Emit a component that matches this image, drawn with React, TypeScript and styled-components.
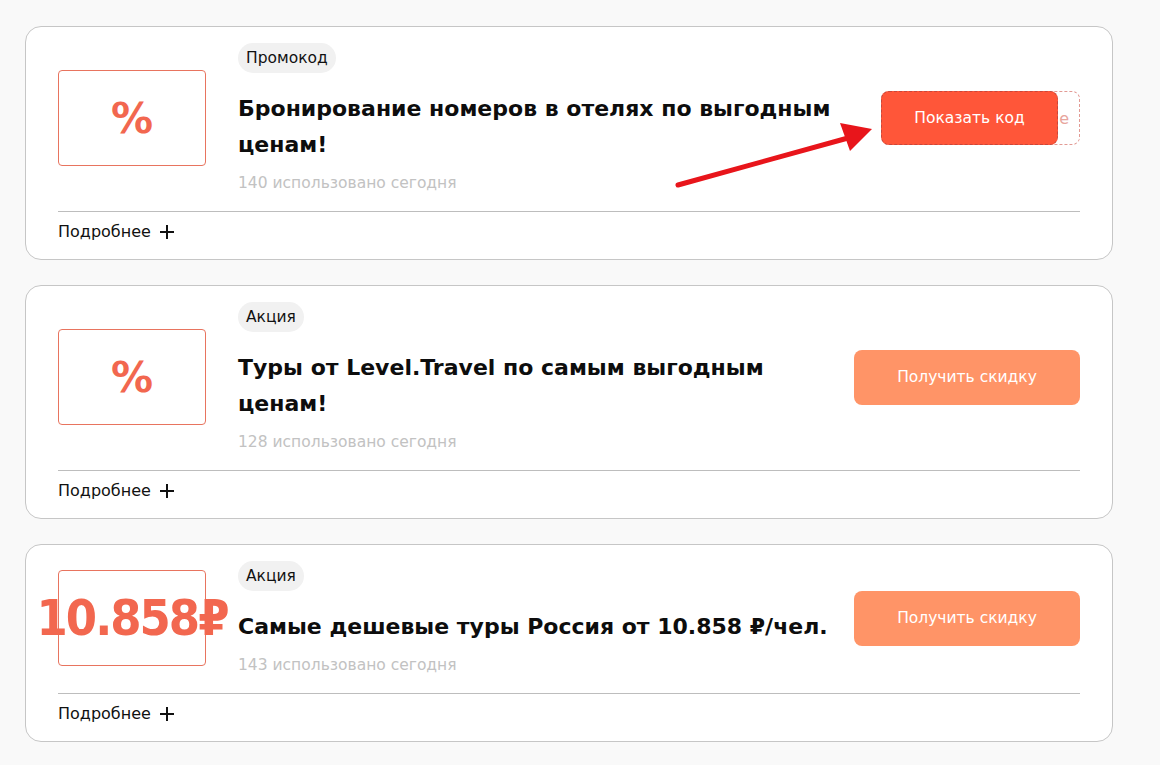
import styled, { createGlobalStyle } from 'styled-components';

const GlobalStyle = createGlobalStyle`
  html, body {
    margin: 0;
    padding: 0;
    background: #f9f9f9;
  }
  body {
    font-family: 'DejaVu Sans', 'Noto Sans', sans-serif;
    color: #111;
  }
`;

const Page = styled.div`
  position: relative;
  width: 1088px;
  padding: 26px 0 20px 25px;
  display: flex;
  flex-direction: column;
  gap: 25px;
`;

const Card = styled.div`
  background: #fff;
  border: 1px solid #c6c6c6;
  border-radius: 16px;
  padding: 16px 32px 0 32px;
`;

const Body = styled.div`
  display: flex;
  align-items: center;
`;

const Thumb = styled.div`
  flex: 0 0 auto;
  width: 146px;
  height: 94px;
  border: 1px solid #e8745f;
  border-radius: 4px;
  display: flex;
  align-items: center;
  justify-content: center;
  margin-right: 32px;
`;

const ThumbText = styled.span<{ $big?: boolean }>`
  font-family: ${(p) => (p.$big ? "'DejaVu Sans Condensed', 'DejaVu Sans'" : "'DejaVu Sans'")}, sans-serif;
  font-weight: 700;
  color: #f2674f;
  font-size: ${(p) => (p.$big ? '50px' : '42px')};
  letter-spacing: ${(p) => (p.$big ? '-2px' : '0')};
  white-space: nowrap;
`;

const Content = styled.div`
  flex: 1;
  min-width: 0;
  padding-right: 10px;
  display: flex;
  flex-direction: column;
  align-items: flex-start;
`;

const Badge = styled.span`
  display: inline-flex;
  align-items: center;
  height: 30px;
  padding: 0 8px;
  border-radius: 15px;
  background: #f1f1f1;
  font-size: 15.5px;
  color: #111;
`;

const Title = styled.div`
  margin-top: 18px;
  font-size: 22px;
  font-weight: 700;
  line-height: 36px;
  color: #0d0d0d;
`;

const Count = styled.div`
  margin-top: 10px;
  font-size: 15.5px;
  color: #c2c2c2;
  line-height: 20px;
`;

const Action = styled.div`
  flex: 0 0 auto;
  width: 226px;
  display: flex;
  justify-content: flex-end;
`;

const CodeWrap = styled.div`
  position: relative;
  width: 199px;
  height: 54px;
  border: 1px dashed #e29a94;
  border-radius: 8px;
  box-sizing: border-box;
  display: flex;
  align-items: center;
  justify-content: flex-end;
  padding-right: 10px;
  font-size: 16px;
  color: #e8a59d;
`;

const RevealButton = styled.button`
  position: absolute;
  left: -1px;
  top: -1px;
  width: 177px;
  height: 54px;
  border: 1px dashed #c8473a;
  border-radius: 8px;
  background: #ff5639;
  color: #fff;
  font-family: inherit;
  font-size: 15.5px;
  cursor: pointer;
`;

const DealButton = styled.button`
  width: 226px;
  height: 55px;
  border: none;
  border-radius: 8px;
  background: #ff9467;
  color: #fff;
  font-family: inherit;
  font-size: 15.5px;
  cursor: pointer;
`;

const Footer = styled.div`
  margin-top: 18px;
  border-top: 1px solid #bdbdbd;
  display: flex;
  align-items: center;
  gap: 9px;
  padding: 10px 0 17px;
  font-size: 16px;
  line-height: 20px;
  color: #111;
`;

const Arrow = styled.svg`
  position: absolute;
  left: 670px;
  top: 118px;
  pointer-events: none;
`;

const Plus = () => (
  <svg width="14" height="14" viewBox="0 0 14 14">
    <path d="M7 0v14M0 7h14" stroke="#111" strokeWidth="2" />
  </svg>
);

type Offer = {
  kind: string;
  title: string;
  count: number;
  thumb: string;
  big?: boolean;
  code?: boolean;
};

const offers: Offer[] = [
  {
    kind: 'Промокод',
    title: 'Бронирование номеров в отелях по выгодным ценам!',
    count: 140,
    thumb: '%',
    code: true,
  },
  {
    kind: 'Акция',
    title: 'Туры от Level.Travel по самым выгодным ценам!',
    count: 128,
    thumb: '%',
  },
  {
    kind: 'Акция',
    title: 'Самые дешевые туры Россия от 10.858 ₽/чел.',
    count: 143,
    thumb: '10.858₽',
    big: true,
  },
];

export default function App() {
  return (
    <>
      <GlobalStyle />
      <Page>
        {offers.map((o, i) => (
          <Card key={i}>
            <Body>
              <Thumb>
                <ThumbText $big={o.big}>{o.thumb}</ThumbText>
              </Thumb>
              <Content>
                <Badge>{o.kind}</Badge>
                <Title>{o.title}</Title>
                <Count>{o.count} использовано сегодня</Count>
              </Content>
              <Action>
                {o.code ? (
                  <CodeWrap>
                    е
                    <RevealButton>Показать код</RevealButton>
                  </CodeWrap>
                ) : (
                  <DealButton>Получить скидку</DealButton>
                )}
              </Action>
            </Body>
            <Footer>
              Подробнее <Plus />
            </Footer>
          </Card>
        ))}
        <Arrow width="210" height="80" viewBox="0 0 210 80">
          <line x1="8" y1="67" x2="178" y2="20" stroke="#e8151b" strokeWidth="5" strokeLinecap="round" />
          <polygon points="202,11 170,5 180,33" fill="#e8151b" />
        </Arrow>
      </Page>
    </>
  );
}
